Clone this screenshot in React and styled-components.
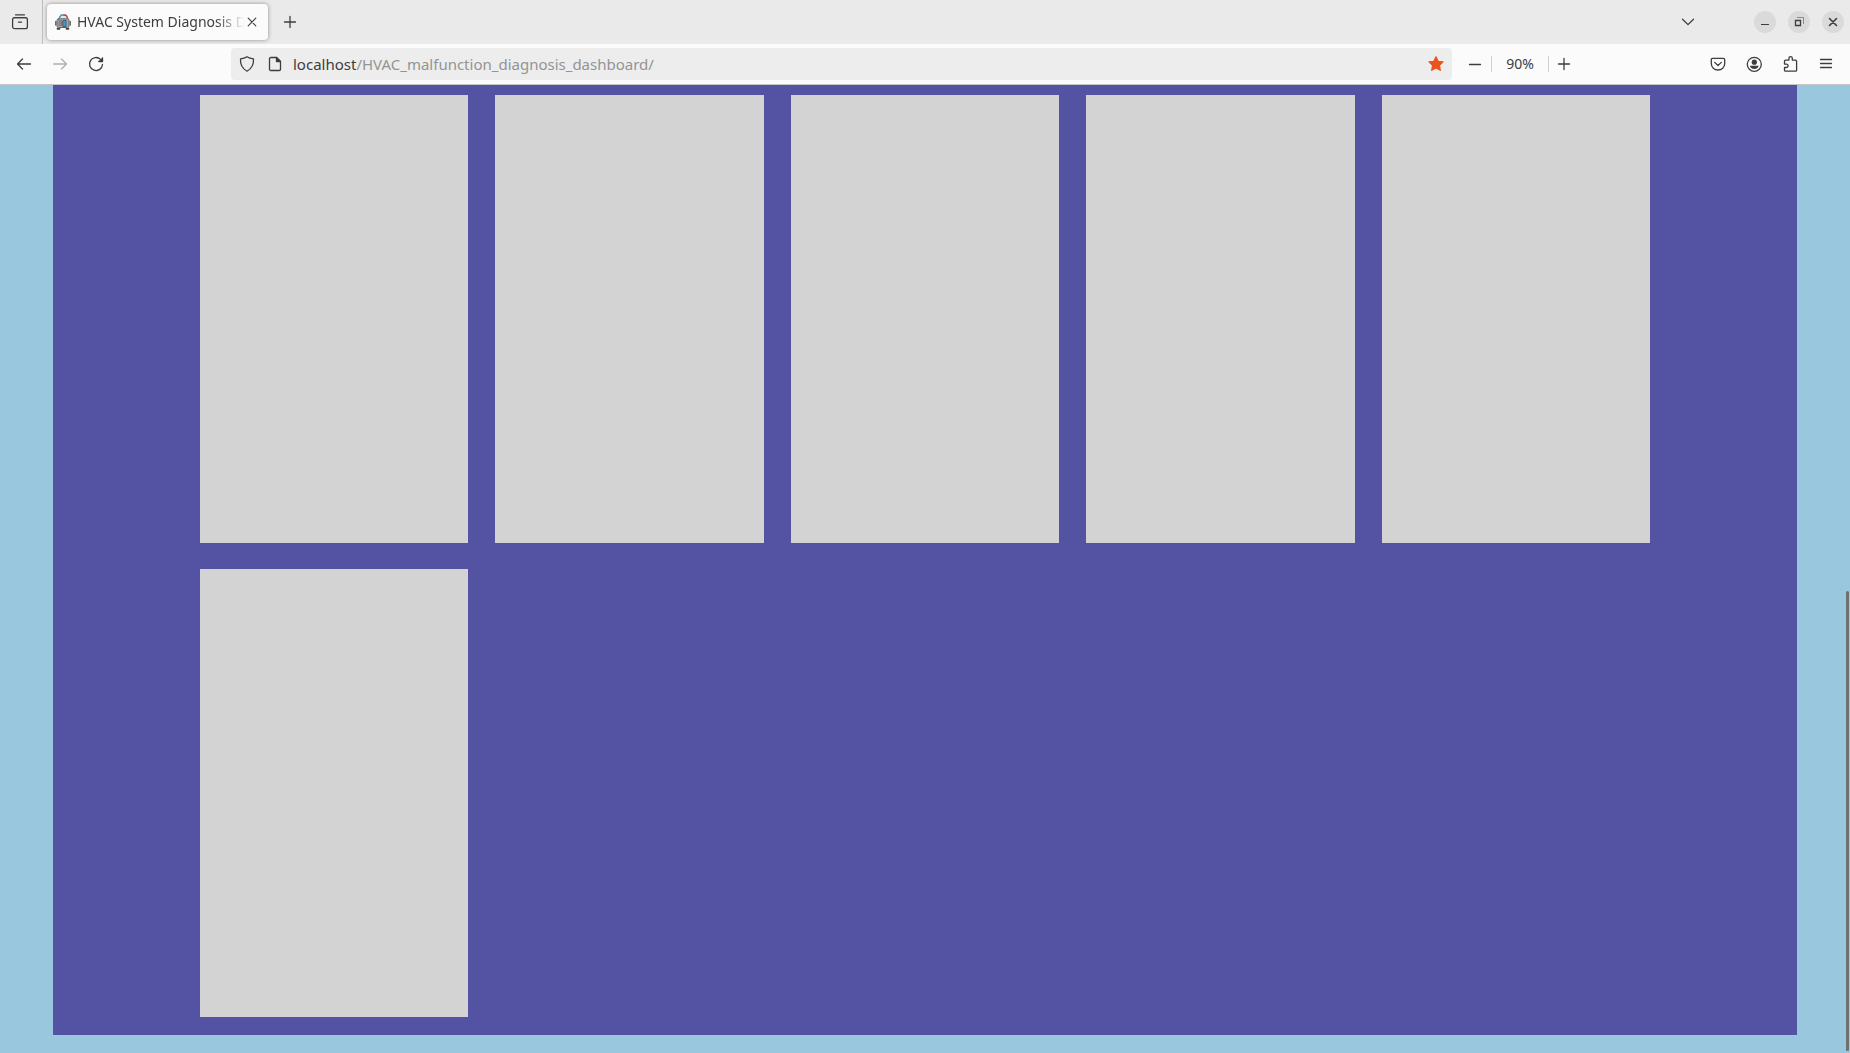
import React from "react";
import styled, { createGlobalStyle } from "styled-components";

const GlobalStyle = createGlobalStyle`
  *, *::before, *::after { box-sizing: border-box; }
  body {
    margin: 0;
    background: #99c8de;
    font-family: "Noto Sans", "Open Sans", sans-serif;
  }
`;

const Window = styled.div`
  display: flex;
  flex-direction: column;
  min-height: 100vh;
`;

const TabStrip = styled.header`
  display: flex;
  align-items: center;
  height: 44px;
  padding-right: 6px;
  background: #eaeaea;
`;

const IconButton = styled.button`
  display: flex;
  align-items: center;
  justify-content: center;
  flex: none;
  width: ${(p) => p.$width || 36}px;
  height: 32px;
  padding: 0;
  border: 0;
  border-radius: 4px;
  background: transparent;
  color: ${(p) => (p.disabled ? "#b0b0b0" : "#3d3d3d")};
`;

const RecentArea = styled.div`
  display: flex;
  align-items: center;
  align-self: stretch;
  padding-left: 2px;
  margin-right: 4px;
  width: 43px;
  border-right: 1px solid #bdbdbd;
`;

const Tab = styled.div`
  display: flex;
  align-items: center;
  width: 221px;
  height: 36px;
  padding: 0 8px;
  border-radius: 4px;
  background: #fbfbfb;
  box-shadow: 0 0 4px rgba(0, 0, 0, 0.4);
`;

const TabTitle = styled.span`
  flex: 1;
  min-width: 0;
  margin-left: 6px;
  overflow: hidden;
  white-space: nowrap;
  font-size: 14px;
  line-height: 20px;
  color: #3d3d3d;
  mask-image: linear-gradient(to left, transparent, #000 28px);
`;

const Spacer = styled.div`
  flex: 1;
`;

const WindowControls = styled.div`
  display: flex;
  gap: 12px;
  margin-left: 48px;
`;

const WindowButton = styled.button`
  display: flex;
  align-items: center;
  justify-content: center;
  width: 22px;
  height: 22px;
  padding: 0;
  border: 0;
  border-radius: 50%;
  background: #dadada;
  color: #3d3d3d;
`;

const NavBar = styled.nav`
  display: flex;
  align-items: center;
  height: 41px;
  padding: 0 6px;
  background: #fbfbfb;
  border-bottom: 1px solid #c6c6c6;
`;

const AddressBar = styled.form`
  display: flex;
  align-items: center;
  flex: 1;
  height: 32px;
  margin-left: 117px;
  margin-right: 7px;
  padding-left: 2px;
  border-radius: 4px;
  background: #ededed;
`;

const AddressLabel = styled.label`
  position: relative;
  flex: 1;
  margin-left: 4px;
  font-size: 15px;
  line-height: 20px;
`;

const AddressText = styled.span`
  position: absolute;
  inset: 0;
  white-space: nowrap;
  color: #949494;
  pointer-events: none;

  b {
    font-weight: 400;
    color: #3d3d3d;
  }
`;

const AddressInput = styled.input`
  display: block;
  width: 100%;
  height: 20px;
  padding: 0;
  border: 0;
  outline: 0;
  background: transparent;
  color: transparent;
  caret-color: #3d3d3d;
  font: inherit;
`;

const ZoomGroup = styled.div`
  display: flex;
  align-items: center;
  margin-right: 121px;
`;

const ZoomLevel = styled.button`
  width: 58px;
  height: 16px;
  padding: 0;
  border: 0;
  border-left: 1px solid #d0d0d0;
  border-right: 1px solid #d0d0d0;
  background: transparent;
  color: #3d3d3d;
  font: inherit;
  font-size: 14px;
  line-height: 16px;
`;

const Viewport = styled.main`
  position: relative;
  flex: 1;
  padding: 0 53px 18px;
`;

const Panel = styled.section`
  padding: 10px 147px 18px;
  background: #5452a3;
`;

const CardGrid = styled.ul`
  display: grid;
  grid-template-columns: repeat(5, 1fr);
  grid-auto-rows: 448px;
  gap: 26px 27px;
  margin: 0;
  padding: 0;
  list-style: none;
`;

const Card = styled.li`
  background: #d3d3d3;
`;

const ScrollThumb = styled.div`
  position: absolute;
  right: 1px;
  bottom: 2px;
  width: 3px;
  height: 460px;
  border-radius: 2px;
  background: #6f6f6f;
`;

const Glyph = styled.svg.attrs({
  viewBox: "0 0 16 16",
  fill: "none",
  stroke: "currentColor",
  strokeLinecap: "round",
  strokeLinejoin: "round",
  "aria-hidden": true,
})`
  display: block;
  flex: none;
  width: 16px;
  height: 16px;
  stroke-width: ${(p) => p.$weight || 1.3};
  color: ${(p) => p.$color || "inherit"};
  overflow: visible;
`;

const RecentIcon = () => (
  <Glyph>
    <path d="M3.5 0.8h9M2 3.7h12" />
    <rect x="0.6" y="3.7" width="14.8" height="11" rx="2" />
    <path d="M6.5 8.2h3" />
  </Glyph>
);
const Favicon = () => (
  <Glyph $weight={1}>
    <path d="M4 4.500L6 1h5l2 3.500" fill="#dfe7ec" stroke="#5e6a75" />
    <path d="M4.500 3.500L6 1.200h2.500" stroke="#5b9cc4" strokeWidth="1.500" />
    <path d="M9 1.200h2l1.300 2.300" stroke="#c8483f" strokeWidth="1.500" />
    <rect x="2" y="4.800" width="12" height="8.700" rx="1.500" fill="#a7a5a5" stroke="#66666a" />
    <path d="M.8 7.500v3.500M15.200 7.500v3.500" stroke="#66666a" strokeWidth="1.500" />
    <path d="M2.500 14.800h2M11.500 14.800h2" stroke="#3f3f44" strokeWidth="1.800" />
    <path d="M4 7h2.500M4 9h2.500M4 11h2.500" stroke="#6b6769" />
    <path d="M6 7.500h1.500v4H6z" fill="#d25746" stroke="none" />
    <path d="M8.300 6.500h2.700v6H8.300z" fill="#2da5dc" stroke="#3d5b70" />
  </Glyph>
);
const CloseIcon = () => (
  <Glyph $weight={1.1}><path d="M4.200 4.200l7.600 7.600M11.800 4.200l-7.600 7.600" /></Glyph>
);
const PlusIcon = () => (
  <Glyph><path d="M8 2.500v11M2.500 8h11" /></Glyph>
);
const MinusIcon = () => (
  <Glyph><path d="M2.500 8.500h11" /></Glyph>
);
const ChevronIcon = () => (
  <Glyph><path d="M2.500 5.200L8 10.600l5.500-5.400" /></Glyph>
);
const MinimizeIcon = () => (
  <Glyph $weight={1}><path d="M4 10.500h8" strokeLinecap="butt" /></Glyph>
);
const RestoreIcon = () => (
  <Glyph>
    <path d="M6 3.500h6.500V10" strokeWidth="1" strokeLinecap="butt" strokeLinejoin="miter" opacity=".5" />
    <path d="M4.500 6.500h5v5h-5z" strokeLinejoin="miter" />
  </Glyph>
);
const WindowCloseIcon = () => (
  <Glyph $weight={1.6}><path d="M4.500 4.500l7 7M11.500 4.500l-7 7" /></Glyph>
);
const BackIcon = () => (
  <Glyph><path d="M14.500 8H1.500M6.500 3L1.500 8l5 5" /></Glyph>
);
const ForwardIcon = () => (
  <Glyph><path d="M1.500 8h13M9.500 3l5 5-5 5" /></Glyph>
);
const ReloadIcon = () => (
  <Glyph>
    <path d="M14.500 8.500A6.500 6.500 0 1 1 12.600 3.400" />
    <path d="M14.500 1.500v4h-4z" fill="currentColor" stroke="none" />
    <path d="M14.500 1.800v3.700h-3.700" />
  </Glyph>
);
const ShieldIcon = () => (
  <Glyph>
    <path d="M8 .8c1.800 1.300 3.700 1.900 6.500 2.100.3 4.600-.7 9.100-6.500 12.300C2.200 12 1.200 7.500 1.500 2.900 4.300 2.700 6.200 2.100 8 .8z" />
  </Glyph>
);
const DocumentIcon = () => (
  <Glyph>
    <path d="M3.800 1.500h5.700l4 4v7.700c0 .8-.5 1.300-1.300 1.300H3.800c-.8 0-1.300-.5-1.300-1.300V2.800c0-.8.500-1.300 1.300-1.300z" />
    <path d="M9.500 1.500v4h4z" fill="currentColor" />
  </Glyph>
);
const StarIcon = () => (
  <Glyph $color="#e95420">
    <path
      d="M8 .9l2.100 4.400 4.900.6-3.600 3.400.9 5L8 12l-4.300 2.300.9-5L1 5.900l4.900-.6z"
      fill="currentColor"
    />
  </Glyph>
);
const PocketIcon = () => (
  <Glyph>
    <path d="M2.600 2.300h10.800c.8 0 1.300.5 1.300 1.300V7.500c0 4-3 6.500-6.700 6.500S1.300 11.500 1.300 7.500V3.600c0-.8.500-1.300 1.300-1.300z" />
    <path d="M4.700 6.400L8 9.500l3.300-3.100" />
  </Glyph>
);
const AccountIcon = () => (
  <Glyph>
    <circle cx="8.300" cy="8.300" r="7" />
    <circle cx="8.300" cy="6.200" r="2.600" fill="currentColor" stroke="none" />
    <path d="M4 9.800h8.600c0 1.700-1.900 3.200-4.300 3.200S4 11.500 4 9.800z" fill="currentColor" stroke="none" />
  </Glyph>
);
const ExtensionIcon = () => (
  <Glyph>
    <path d="M2.500 7V5.200c0-.7.400-1.100 1.100-1.100h3.300V2.300a1.700 1.700 0 0 1 3.400 0v1.800h3.200c.7 0 1.100.4 1.100 1.100v9c0 .6-.4 1-1 1H3.500c-.6 0-1-.4-1-1v-2.700h1.900a1.700 1.700 0 0 0 0-3.400H2.500z" />
  </Glyph>
);
const MenuIcon = () => (
  <Glyph><path d="M2.500 3.500h11M2.500 7.500h11M2.500 11.500h11" /></Glyph>
);

const CARDS = ["1", "2", "3", "4", "5", "6"];

export default function App() {
  return (
    <Window>
      <GlobalStyle />
      <TabStrip>
        <RecentArea>
          <IconButton aria-label="Recent browsing"><RecentIcon /></IconButton>
        </RecentArea>
        <Tab>
          <Favicon />
          <TabTitle>HVAC System Diagnosis Dashboard</TabTitle>
          <IconButton $width={16} aria-label="Close tab"><CloseIcon /></IconButton>
        </Tab>
        <IconButton $width={44} aria-label="New tab"><PlusIcon /></IconButton>
        <Spacer />
        <IconButton aria-label="List all tabs"><ChevronIcon /></IconButton>
        <WindowControls>
          <WindowButton aria-label="Minimize"><MinimizeIcon /></WindowButton>
          <WindowButton aria-label="Restore"><RestoreIcon /></WindowButton>
          <WindowButton aria-label="Close window"><WindowCloseIcon /></WindowButton>
        </WindowControls>
      </TabStrip>
      <NavBar aria-label="Browser">
        <IconButton aria-label="Back"><BackIcon /></IconButton>
        <IconButton aria-label="Forward" disabled><ForwardIcon /></IconButton>
        <IconButton aria-label="Reload"><ReloadIcon /></IconButton>
        <AddressBar onSubmit={(e) => e.preventDefault()}>
          <IconButton type="button" $width={28} aria-label="Tracking protection"><ShieldIcon /></IconButton>
          <IconButton type="button" $width={28} aria-label="Site information"><DocumentIcon /></IconButton>
          <AddressLabel>
            <AddressText><b>localhost</b>/HVAC_malfunction_diagnosis_dashboard/</AddressText>
            <AddressInput aria-label="Address" />
          </AddressLabel>
          <IconButton type="button" $width={32} aria-label="Edit bookmark"><StarIcon /></IconButton>
        </AddressBar>
        <ZoomGroup>
          <IconButton $width={32} aria-label="Zoom out"><MinusIcon /></IconButton>
          <ZoomLevel aria-label="Reset zoom">90%</ZoomLevel>
          <IconButton $width={30} aria-label="Zoom in"><PlusIcon /></IconButton>
        </ZoomGroup>
        <IconButton aria-label="Save to Pocket"><PocketIcon /></IconButton>
        <IconButton aria-label="Account"><AccountIcon /></IconButton>
        <IconButton aria-label="Extensions"><ExtensionIcon /></IconButton>
        <IconButton aria-label="Menu"><MenuIcon /></IconButton>
      </NavBar>
      <Viewport>
        <Panel>
          <CardGrid>
            {CARDS.map((id) => (
              <Card key={id} />
            ))}
          </CardGrid>
        </Panel>
        <ScrollThumb />
      </Viewport>
    </Window>
  );
}
